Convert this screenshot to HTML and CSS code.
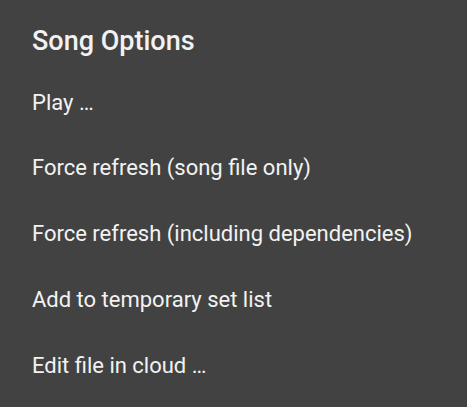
FILE: index.html
```html
<!DOCTYPE html>
<html>
<head>
<meta charset="utf-8">
<link rel="stylesheet" href="styles.css">
</head>
<body>
<div class="dialog">
  <h1 class="title">Song Options</h1>
  <ul class="options">
    <li class="option">Play …</li>
    <li class="option">Force refresh (song file only)</li>
    <li class="option">Force refresh (including dependencies)</li>
    <li class="option">Add to temporary set list</li>
    <li class="option">Edit file in cloud …</li>
  </ul>
</div>
</body>
</html>
```
FILE: styles.css
```css
html, body {
  margin: 0;
  padding: 0;
  background: #424242;
}
.dialog {
  width: 467px;
  height: 407px;
  overflow: hidden;
  background: #424242;
  color: #f2f2f2;
  font-family: Roboto, "Noto Sans", sans-serif;
  padding: 25px 0 0 32px;
  box-sizing: border-box;
}
.title {
  margin: 0;
  font-size: 27px;
  font-weight: 500;
  line-height: 32px;
}
.options {
  list-style: none;
  margin: 12.5px 0 0;
  padding: 0;
}
.option {
  font-size: 22px;
  line-height: 65.75px;
  white-space: nowrap;
}
```
